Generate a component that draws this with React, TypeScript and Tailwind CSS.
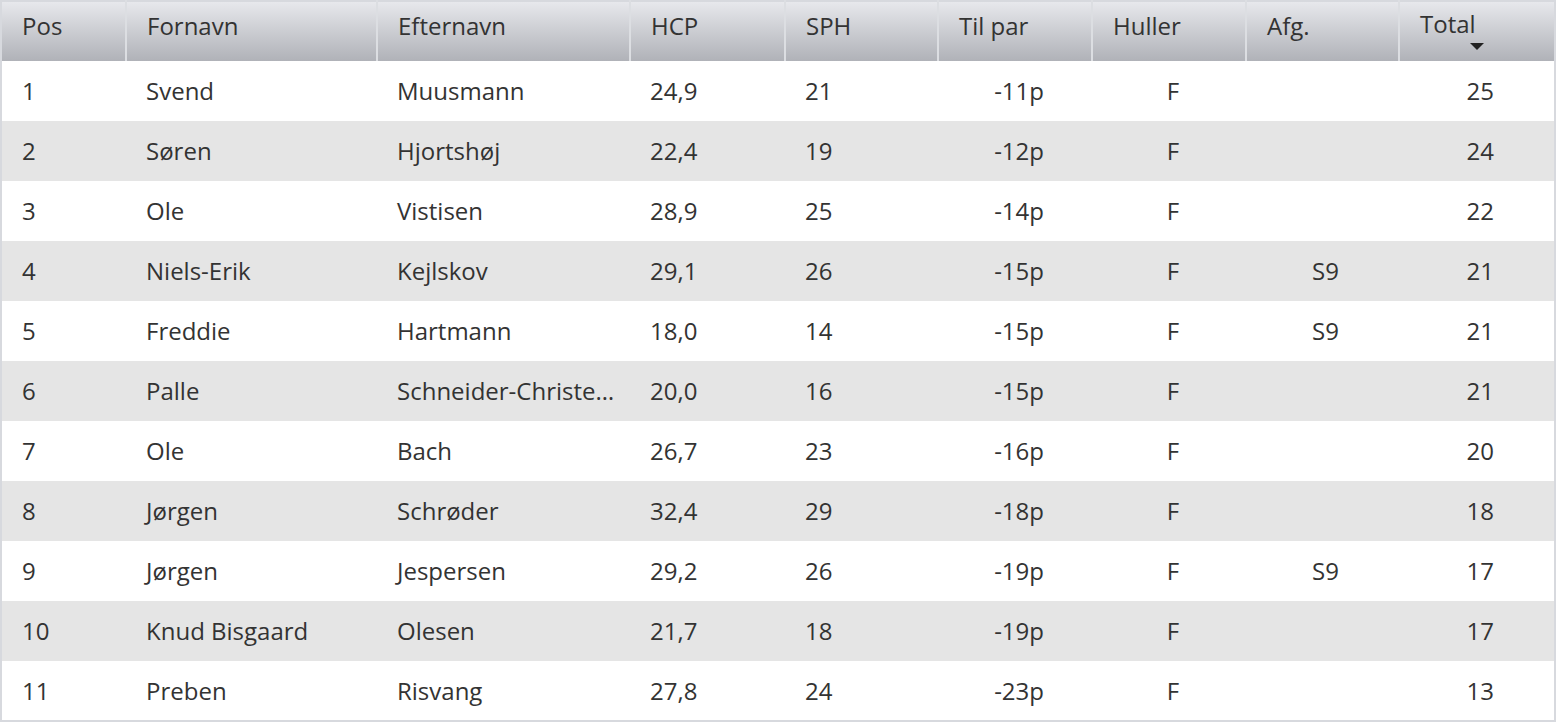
const rows = [
  { pos: 1, first: "Svend", last: "Muusmann", hcp: "24,9", sph: 21, par: "-11p", holes: "F", afg: "", total: 25 },
  { pos: 2, first: "Søren", last: "Hjortshøj", hcp: "22,4", sph: 19, par: "-12p", holes: "F", afg: "", total: 24 },
  { pos: 3, first: "Ole", last: "Vistisen", hcp: "28,9", sph: 25, par: "-14p", holes: "F", afg: "", total: 22 },
  { pos: 4, first: "Niels-Erik", last: "Kejlskov", hcp: "29,1", sph: 26, par: "-15p", holes: "F", afg: "S9", total: 21 },
  { pos: 5, first: "Freddie", last: "Hartmann", hcp: "18,0", sph: 14, par: "-15p", holes: "F", afg: "S9", total: 21 },
  { pos: 6, first: "Palle", last: "Schneider-Christensen", hcp: "20,0", sph: 16, par: "-15p", holes: "F", afg: "", total: 21 },
  { pos: 7, first: "Ole", last: "Bach", hcp: "26,7", sph: 23, par: "-16p", holes: "F", afg: "", total: 20 },
  { pos: 8, first: "Jørgen", last: "Schrøder", hcp: "32,4", sph: 29, par: "-18p", holes: "F", afg: "", total: 18 },
  { pos: 9, first: "Jørgen", last: "Jespersen", hcp: "29,2", sph: 26, par: "-19p", holes: "F", afg: "S9", total: 17 },
  { pos: 10, first: "Knud Bisgaard", last: "Olesen", hcp: "21,7", sph: 18, par: "-19p", holes: "F", afg: "", total: 17 },
  { pos: 11, first: "Preben", last: "Risvang", hcp: "27,8", sph: 24, par: "-23p", holes: "F", afg: "", total: 13 },
]

const th = "h-[60px] align-top pt-[6px] px-5 font-normal text-left border-l-2 border-[#dcdee2] first:border-l-0"

export default function App() {
  return (
    <div className="w-[1556px] h-[724px] bg-white font-['Open_Sans',sans-serif] text-[24px] text-[#333]">
      <table className="w-full table-fixed border-collapse border-2 border-[#d7d9de]">
        <colgroup>
          <col className="w-[125px]" />
          <col className="w-[251px]" />
          <col className="w-[253px]" />
          <col className="w-[155px]" />
          <col className="w-[153px]" />
          <col className="w-[154px]" />
          <col className="w-[154px]" />
          <col className="w-[153px]" />
          <col />
        </colgroup>
        <thead>
          <tr className="bg-gradient-to-b from-[#e8e9ed] to-[#b0b2b8] text-[#333]">
            <th className={th}>Pos</th>
            <th className={th}>Fornavn</th>
            <th className={th}>Efternavn</th>
            <th className={th}>HCP</th>
            <th className={th}>SPH</th>
            <th className={th}>Til par</th>
            <th className={th}>Huller</th>
            <th className={th}>Afg.</th>
            <th className={th}>
              <div className="flex flex-col items-start">
                <span className="leading-[32px]">Total</span>
                <svg width="14" height="7" viewBox="0 0 14 7" className="ml-[50px] mt-[3px]">
                  <path d="M0 0h14L7 7z" fill="#222" />
                </svg>
              </div>
            </th>
          </tr>
        </thead>
        <tbody>
          {rows.map((r, i) => (
            <tr key={r.pos} className={i % 2 ? "bg-[#e5e5e5]" : "bg-white"}>
              <td className="h-[60px] px-5">{r.pos}</td>
              <td className="h-[60px] px-5">{r.first}</td>
              <td className="h-[60px] pl-5 pr-3 truncate">{r.last}</td>
              <td className="h-[60px] px-5">{r.hcp}</td>
              <td className="h-[60px] px-5">{r.sph}</td>
              <td className="h-[60px] pr-12 text-right">{r.par}</td>
              <td className="h-[60px] pl-2 text-center">{r.holes}</td>
              <td className="h-[60px] pl-1.5 text-center">{r.afg}</td>
              <td className="h-[60px] pr-[60px] text-right">{r.total}</td>
            </tr>
          ))}
        </tbody>
      </table>
    </div>
  )
}
